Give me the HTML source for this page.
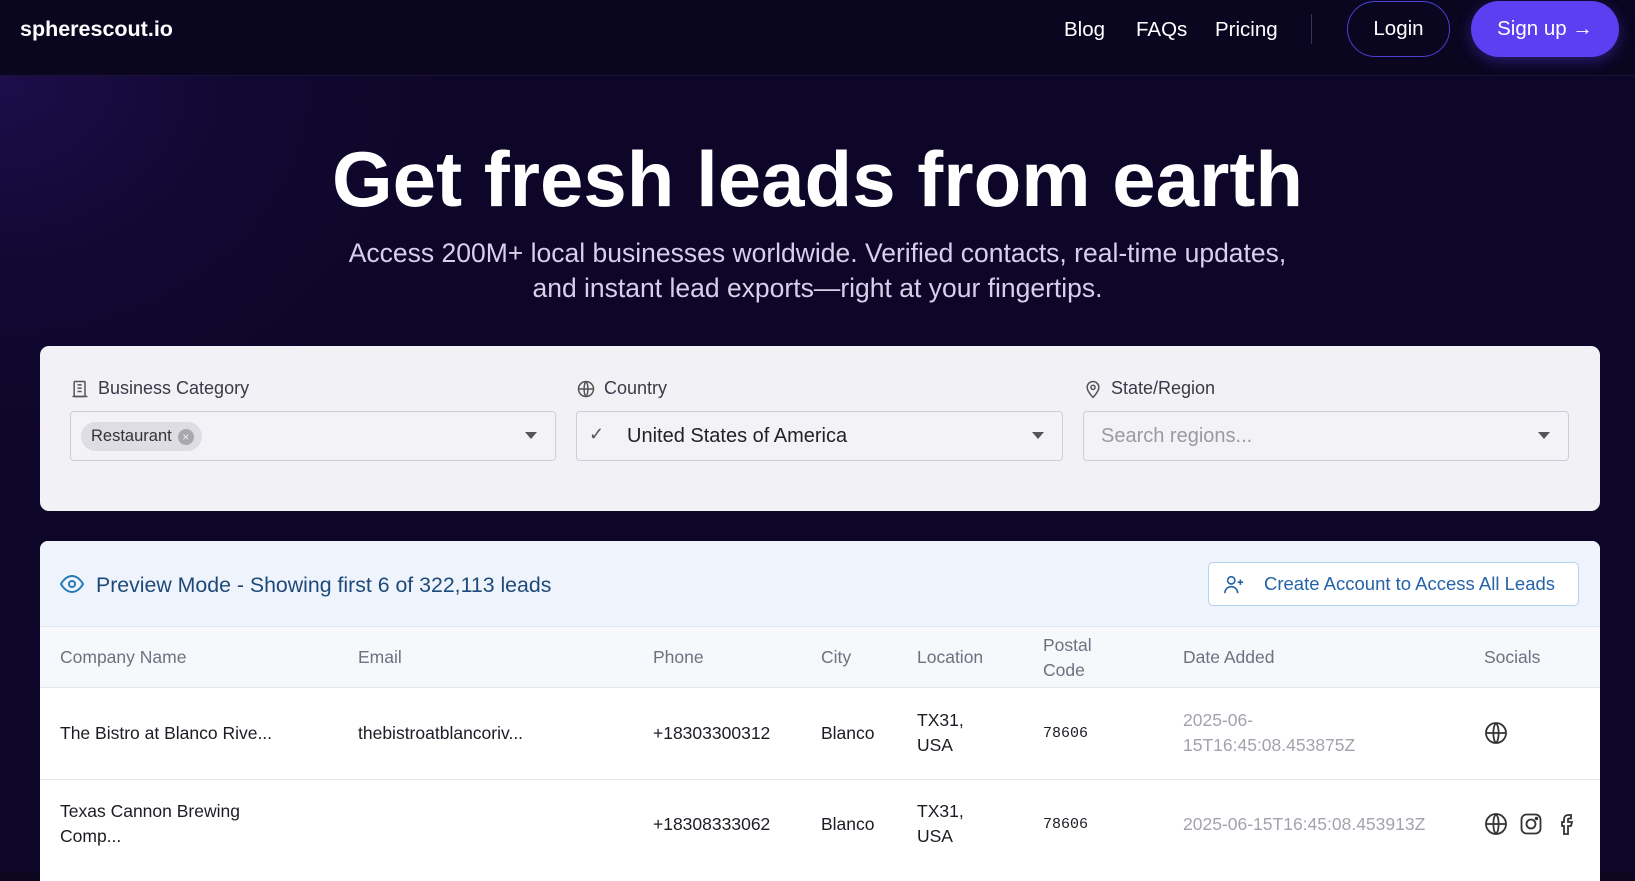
<!DOCTYPE html>
<html><head><meta charset="utf-8"><style>
*{box-sizing:border-box;margin:0;padding:0}
body{width:1635px;height:871px;overflow:hidden;font-family:"Liberation Sans",sans-serif;background:#0c0620;position:relative}
.bg{position:absolute;left:0;top:76px;width:1635px;height:795px;background:radial-gradient(ellipse 600px 500px at 0px 0px,#1c0e4a 0%,rgba(20,10,60,0.5) 40%,rgba(12,6,32,0) 80%),#0e0628}
.nav{position:absolute;left:0;top:0;width:1635px;height:76px;background:#0a0620;border-bottom:1px solid #1a1438}
.logo{position:absolute;left:20px;top:17px;color:#fff;font-weight:bold;font-size:21.5px}
.nl{position:absolute;top:18px;color:#fff;font-size:20.5px}
.div{position:absolute;left:1311px;top:14px;width:1px;height:30px;background:#3a3458}
.login{position:absolute;left:1347px;top:1px;width:103px;height:56px;border:1.5px solid #4b3fd6;border-radius:28px;color:#fff;font-size:20.5px;text-align:center;line-height:53px}
.sign{position:absolute;left:1471px;top:1px;width:148px;height:56px;background:#5b3ff0;border-radius:28px;color:#fff;font-size:20.5px;text-align:center;line-height:56px;box-shadow:0 4px 14px rgba(91,63,240,.4)}
h1{position:absolute;left:0;width:1635px;top:134px;text-align:center;color:#fff;font-size:78px;font-weight:bold;letter-spacing:0px}
.sub{position:absolute;left:0;width:1635px;top:236px;text-align:center;color:#d6d0ea;font-size:26.5px;line-height:35px}
.card{position:absolute;left:40px;top:346px;width:1560px;height:165px;background:#f2f1f6;border-radius:9px}
.lab{position:absolute;top:378px;color:#3a3a48;font-size:18px;display:flex;align-items:center;gap:8px}
.inp{position:absolute;top:411px;height:50px;border:1px solid #cfced8;border-radius:4px;background:#f3f2f7}
.arr{position:absolute;right:18px;top:20px;width:0;height:0;border-left:6px solid transparent;border-right:6px solid transparent;border-top:7px solid #555}
.tbl{position:absolute;left:40px;top:541px;width:1560px;height:340px;background:#fff;border-radius:8px 8px 0 0;overflow:hidden}
.hb{position:absolute;left:0;top:0;width:1560px;height:86px;background:#eef3fc;border-bottom:1px solid #e3e8f0}
.ch{position:absolute;left:0;top:86px;width:1560px;height:61px;background:#f7f8fb;border-bottom:1px solid #e3e6ec}
.t{position:absolute;font-size:17.5px;color:#1c1c24;line-height:25px}
.h{position:absolute;font-size:17.5px;color:#6b7280;line-height:25px}
.g{color:#a3a3ad}
.m{font-family:"Liberation Mono",monospace;font-size:15px}
</style></head><body>
<div class="bg"></div>
<div class="nav">
<div class="logo">spherescout.io</div>
<div class="nl" style="left:1064px">Blog</div>
<div class="nl" style="left:1136px">FAQs</div>
<div class="nl" style="left:1215px">Pricing</div>
<div class="div"></div>
<div class="login">Login</div>
<div class="sign">Sign up →</div>
</div>
<h1>Get fresh leads from earth</h1>
<div class="sub">Access 200M+ local businesses worldwide. Verified contacts, real-time updates,<br>and instant lead exports—right at your fingertips.</div>
<div class="card"></div>
<div class="lab" style="left:70px"><svg width="20" height="20" viewBox="0 0 24 24" fill="none" stroke="#555" stroke-width="1.8"><rect x="5" y="3" width="13" height="18" rx="1"/><path d="M3 21h18M9 7h5M9 11h5M9 15h5"/></svg>Business Category</div>
<div class="lab" style="left:576px"><svg width="20" height="20" viewBox="0 0 24 24" fill="none" stroke="#555" stroke-width="1.8"><circle cx="12" cy="12" r="9"/><path d="M3 12h18M12 3c3 3 3 15 0 18M12 3c-3 3-3 15 0 18"/></svg>Country</div>
<div class="lab" style="left:1083px"><svg width="20" height="20" viewBox="0 0 24 24" fill="none" stroke="#555" stroke-width="1.8"><path d="M12 22s7-7 7-12a7 7 0 0 0-14 0c0 5 7 12 7 12z"/><circle cx="12" cy="10" r="2.5"/></svg>State/Region</div>
<div class="inp" style="left:70px;width:486px"><div style="position:absolute;left:10px;top:10px;height:29px;padding:0 8px 0 10px;background:#dedde4;border-radius:15px;font-size:16.5px;color:#333;line-height:29px;display:flex;align-items:center;gap:6px">Restaurant <span style="display:inline-block;width:16px;height:16px;border-radius:8px;background:#a8a8b0;color:#eee;font-size:12px;line-height:16px;text-align:center">×</span></div><div class="arr"></div></div>
<div class="inp" style="left:576px;width:487px"><span style="position:absolute;left:12px;top:12px;color:#555;font-size:18px">✓</span><span style="position:absolute;left:50px;top:13px;color:#222;font-size:20px">United States of America</span><div class="arr"></div></div>
<div class="inp" style="left:1083px;width:486px"><span style="position:absolute;left:17px;top:13px;color:#9a9aa4;font-size:20px">Search regions...</span><div class="arr"></div></div>
<div class="tbl">
<div class="hb">
<svg style="position:absolute;left:20px;top:33px" width="24" height="20" viewBox="0 0 24 20" fill="none" stroke="#2a7ab8" stroke-width="2"><path d="M1 10s4-8 11-8 11 8 11 8-4 8-11 8S1 10 1 10z"/><circle cx="12" cy="10" r="3"/></svg>
<div style="position:absolute;left:56px;top:32px;color:#1e4a7a;font-size:21.3px">Preview Mode - Showing first 6 of 322,113 leads</div>
<div style="position:absolute;left:1168px;top:21px;width:371px;height:44px;border:1px solid #b9d3ea;border-radius:5px;background:#fff;color:#2563a8;font-size:18.5px;line-height:42px;padding-left:55px;white-space:nowrap">Create Account to Access All Leads
<svg style="position:absolute;left:14px;top:11px" width="22" height="20" viewBox="0 0 24 22" fill="none" stroke="#2563a8" stroke-width="1.8"><circle cx="9" cy="7" r="4"/><path d="M2 21c0-4 3-7 7-7s7 3 7 7M19 6v6M16 9h6"/></svg></div>
</div>
<div class="ch">
<div class="h" style="left:20px;top:18px">Company Name</div>
<div class="h" style="left:318px;top:18px">Email</div>
<div class="h" style="left:613px;top:18px">Phone</div>
<div class="h" style="left:781px;top:18px">City</div>
<div class="h" style="left:877px;top:18px">Location</div>
<div class="h" style="left:1003px;top:6px">Postal<br>Code</div>
<div class="h" style="left:1143px;top:18px">Date Added</div>
<div class="h" style="left:1444px;top:18px">Socials</div>
</div>
<div style="position:absolute;left:0;top:238px;width:1560px;height:1px;background:#e5e7eb"></div>
<div class="t" style="left:20px;top:180px">The Bistro at Blanco Rive...</div>
<div class="t" style="left:318px;top:180px">thebistroatblancoriv...</div>
<div class="t" style="left:613px;top:180px">+18303300312</div>
<div class="t" style="left:781px;top:180px">Blanco</div>
<div class="t" style="left:877px;top:167px">TX31,<br>USA</div>
<div class="t m" style="left:1003px;top:180px">78606</div>
<div class="t g" style="left:1143px;top:167px">2025-06-<br>15T16:45:08.453875Z</div>
<svg style="position:absolute;left:1444px;top:180px" width="24" height="24" viewBox="0 0 24 24" fill="none" stroke="#333" stroke-width="1.8"><circle cx="12" cy="12" r="10"/><path d="M2 12h20M12 2c3.5 3.5 3.5 16.5 0 20M12 2c-3.5 3.5-3.5 16.5 0 20"/></svg>
<div class="t" style="left:20px;top:258px">Texas Cannon Brewing<br>Comp...</div>
<div class="t" style="left:613px;top:271px">+18308333062</div>
<div class="t" style="left:781px;top:271px">Blanco</div>
<div class="t" style="left:877px;top:258px">TX31,<br>USA</div>
<div class="t m" style="left:1003px;top:271px">78606</div>
<div class="t g" style="left:1143px;top:271px">2025-06-15T16:45:08.453913Z</div>
<svg style="position:absolute;left:1444px;top:271px" width="24" height="24" viewBox="0 0 24 24" fill="none" stroke="#333" stroke-width="1.8"><circle cx="12" cy="12" r="10"/><path d="M2 12h20M12 2c3.5 3.5 3.5 16.5 0 20M12 2c-3.5 3.5-3.5 16.5 0 20"/></svg>
<svg style="position:absolute;left:1479px;top:271px" width="24" height="24" viewBox="0 0 24 24" fill="none" stroke="#333" stroke-width="1.8"><rect x="2.5" y="2.5" width="19" height="19" rx="5"/><circle cx="12" cy="12" r="4.5"/><circle cx="17.5" cy="6.5" r="0.8" fill="#333"/></svg>
<svg style="position:absolute;left:1515px;top:271px" width="24" height="24" viewBox="0 0 24 24" fill="none" stroke="#333" stroke-width="1.8"><path d="M15 3h-2a4 4 0 0 0-4 4v3H7v4h2v8h4v-8h3l1-4h-4V7.5a1 1 0 0 1 1-1h2V3z"/></svg>
</div>
</body></html>
